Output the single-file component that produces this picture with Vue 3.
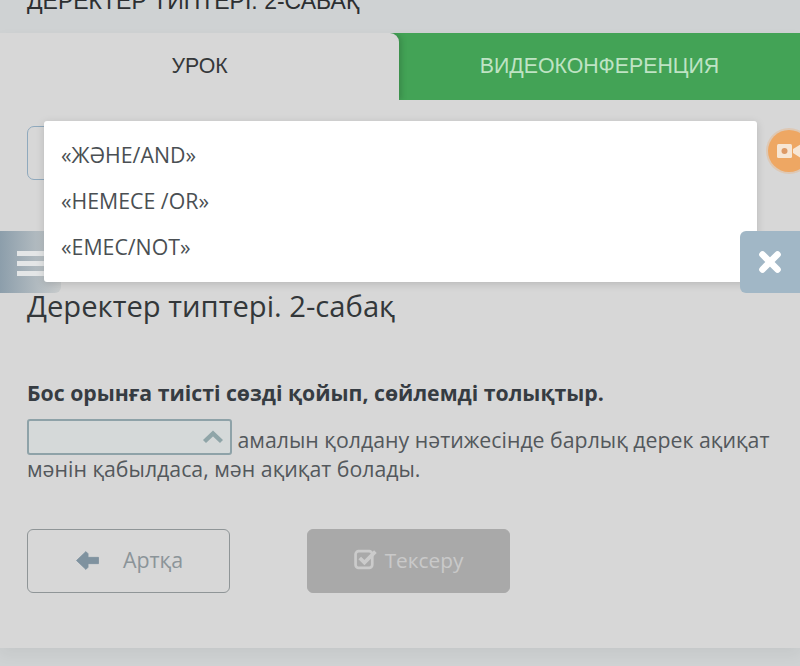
<script setup>
const options = ['«ЖӘНЕ/AND»', '«НЕМЕСЕ /OR»', '«ЕМЕС/NOT»']
</script>

<template>
  <div class="page">
    <h2 class="top-title">ДЕРЕКТЕР ТИПТЕРІ. 2-САБАҚ</h2>
    <main class="card">
      <nav class="tabs">
        <div class="tab tab-active">УРОК</div>
        <div class="tab tab-video">ВИДЕОКОНФЕРЕНЦИЯ</div>
      </nav>
      <div class="toolbar">
        <div class="search"></div>
        <div class="video-btn">
          <svg width="24" height="16" viewBox="0 0 24 16">
            <rect x="0" y="1" width="15" height="14" rx="1.5" fill="#f7e6d4" />
            <circle cx="7.5" cy="8" r="3" fill="#dd9a66" />
            <path d="M16 6 L24 1 V15 L16 10 Z" fill="#f7e6d4" />
          </svg>
        </div>
      </div>
      <section class="content">
        <h1 class="title">Деректер типтері. 2-сабақ</h1>
        <p class="question">Бос орынға тиісті сөзді қойып, сөйлемді толықтыр.</p>
        <p class="sentence">
          <span class="select">
            <svg width="22" height="14" viewBox="0 0 22 14">
              <path d="M2.5 11.5 L11 3.5 L19.5 11.5" fill="none" stroke="#8fa5a8" stroke-width="4.4" />
            </svg>
          </span>
          амалын қолдану нәтижесінде барлық дерек ақиқат мәнін қабылдаса, мән ақиқат болады.
        </p>
        <div class="actions">
          <button class="btn btn-back">
            <svg class="arrow" width="23" height="19" viewBox="0 0 22 18">
              <path d="M0.5 9 L9.5 0.5 L11.5 2.5 V6 H21.5 V12 H11.5 V15.5 L9.5 17.5 Z" fill="#7f929f" stroke="#7f929f" stroke-width="0.8" stroke-linejoin="round" />
            </svg>
            <span>Артқа</span>
          </button>
          <button class="btn btn-check">
            <svg class="check" width="24" height="22" viewBox="0 0 23 21">
              <rect x="1.5" y="3" width="16" height="16" rx="3" fill="none" stroke="#cbcbcb" stroke-width="2.6" />
              <path d="M5.5 9.5 L10 14 L20.5 3.5" fill="none" stroke="#cbcbcb" stroke-width="3.6" />
            </svg>
            <span>Тексеру</span>
          </button>
        </div>
      </section>
    </main>

    <button class="side side-menu" aria-label="Меню">
      <span class="bar"></span><span class="bar"></span><span class="bar"></span>
    </button>

    <ul class="dropdown">
      <li v-for="o in options" :key="o">{{ o }}</li>
    </ul>

    <button class="side side-close" aria-label="Жабу">
      <svg width="24" height="24" viewBox="0 0 24 24">
        <path d="M4.5 4.5 L19.5 19.5 M19.5 4.5 L4.5 19.5" stroke="#fff" stroke-width="6.6" stroke-linecap="round" />
      </svg>
    </button>
  </div>
</template>

<style>
html, body { margin: 0; background: #cfd2d3; }
</style>

<style scoped>
.page {
  position: relative;
  width: 800px;
  height: 666px;
  overflow: hidden;
  background: #cfd2d3;
  font-family: "Open Sans", sans-serif;
}
.top-title {
  margin: -13px 0 0 27px;
  height: 46px;
  font: 400 23px/28px "Liberation Sans", sans-serif;
  color: #2c2f31;
}
.card {
  height: 615px;
  background: #d7d7d7;
  box-shadow: 0 6px 14px rgba(0, 0, 0, 0.05);
}
.tabs { display: flex; height: 67px; background: #43a356; overflow: hidden; }
.tab {
  flex: 1;
  display: flex;
  align-items: center;
  justify-content: center;
  font: 400 21.3px/1 "Liberation Sans", sans-serif;
}
.tab-active {
  flex: 0 0 399px;
  background: #d7d7d7;
  color: #35383a;
  border-top-right-radius: 9px;
  box-shadow: 3px 0 5px rgba(40, 90, 50, 0.3);
}
.tab-video { color: #bfe3c4; }
.toolbar {
  display: flex;
  align-items: center;
  justify-content: space-between;
  padding: 26px 0 0 27px;
  height: 54px;
}
.search {
  width: 400px;
  height: 52px;
  border: 1px solid #8fa9bd;
  border-radius: 7px;
}
.video-btn {
  width: 42px;
  height: 42px;
  margin: 0 -10px 4px 0;
  padding-left: 9px;
  box-sizing: border-box;
  display: flex;
  align-items: center;
  border-radius: 50%;
  background: #eea763;
  box-shadow: 0 0 0 2px rgba(238, 167, 99, 0.3);
}
.content { padding: 107px 27px 0; }
.title {
  margin: 0;
  font-size: 29.2px;
  font-weight: 400;
  line-height: 38px;
  color: #33373a;
}
.question {
  margin: 53px 0 0;
  font-size: 21.25px;
  font-weight: 700;
  line-height: 30px;
  color: #363c42;
}
.sentence {
  margin: 17px 0 0;
  font-size: 21.3px;
  line-height: 29px;
  color: #53585c;
  width: 760px;
}
.select {
  display: inline-flex;
  align-items: center;
  justify-content: flex-end;
  box-sizing: border-box;
  width: 205px;
  height: 36px;
  padding-right: 6px;
  margin: -12px 0 -12px 0;
  border: 2px solid #8ea2a8;
  border-radius: 3px;
  background: #d5d9d9;
  vertical-align: 4px;
}
.actions { display: flex; gap: 77px; margin-top: 46px; }
.btn {
  box-sizing: border-box;
  width: 203px;
  height: 64px;
  display: flex;
  align-items: center;
  justify-content: center;
  border-radius: 6px;
  font: 400 21.4px/1 "Open Sans", sans-serif;
}
.btn span { margin-top: -2px; }
.arrow { margin: -2px 0 0 2px; }
.check { margin-top: -4px; }
.btn-back {
  gap: 24px;
  border: 1px solid #8f9597;
  background: transparent;
  color: #8b9499;
}
.btn-check {
  gap: 7px;
  border: 1px solid #a9a9a9;
  background: #a9a9a9;
  color: #c9c9c9;
  font-size: 20.8px;
}
.side {
  position: absolute;
  top: 231px;
  height: 62px;
  padding: 0;
  border: 0;
  display: flex;
}
.side-menu {
  left: 0;
  width: 61px;
  flex-direction: column;
  gap: 5px;
  padding: 20px 0 0 17px;
  box-sizing: border-box;
  border-bottom-right-radius: 6px;
  background: linear-gradient(90deg, #8c9eab, #c9cccd);
}
.bar { width: 40px; height: 5px; background: #e4e6e7; }
.side-close {
  left: 740px;
  width: 60px;
  align-items: center;
  justify-content: center;
  border-radius: 6px 0 0 6px;
  background: #a1b7c6;
}
.dropdown {
  position: absolute;
  left: 44px;
  top: 121px;
  width: 713px;
  height: 161px;
  box-sizing: border-box;
  margin: 0;
  padding: 11px 17px;
  list-style: none;
  background: #fff;
  border-radius: 3px;
  box-shadow: 0 2px 8px rgba(0, 0, 0, 0.15);
}
.dropdown li {
  font-size: 21.3px;
  line-height: 46px;
  color: #4a4f53;
}
</style>
